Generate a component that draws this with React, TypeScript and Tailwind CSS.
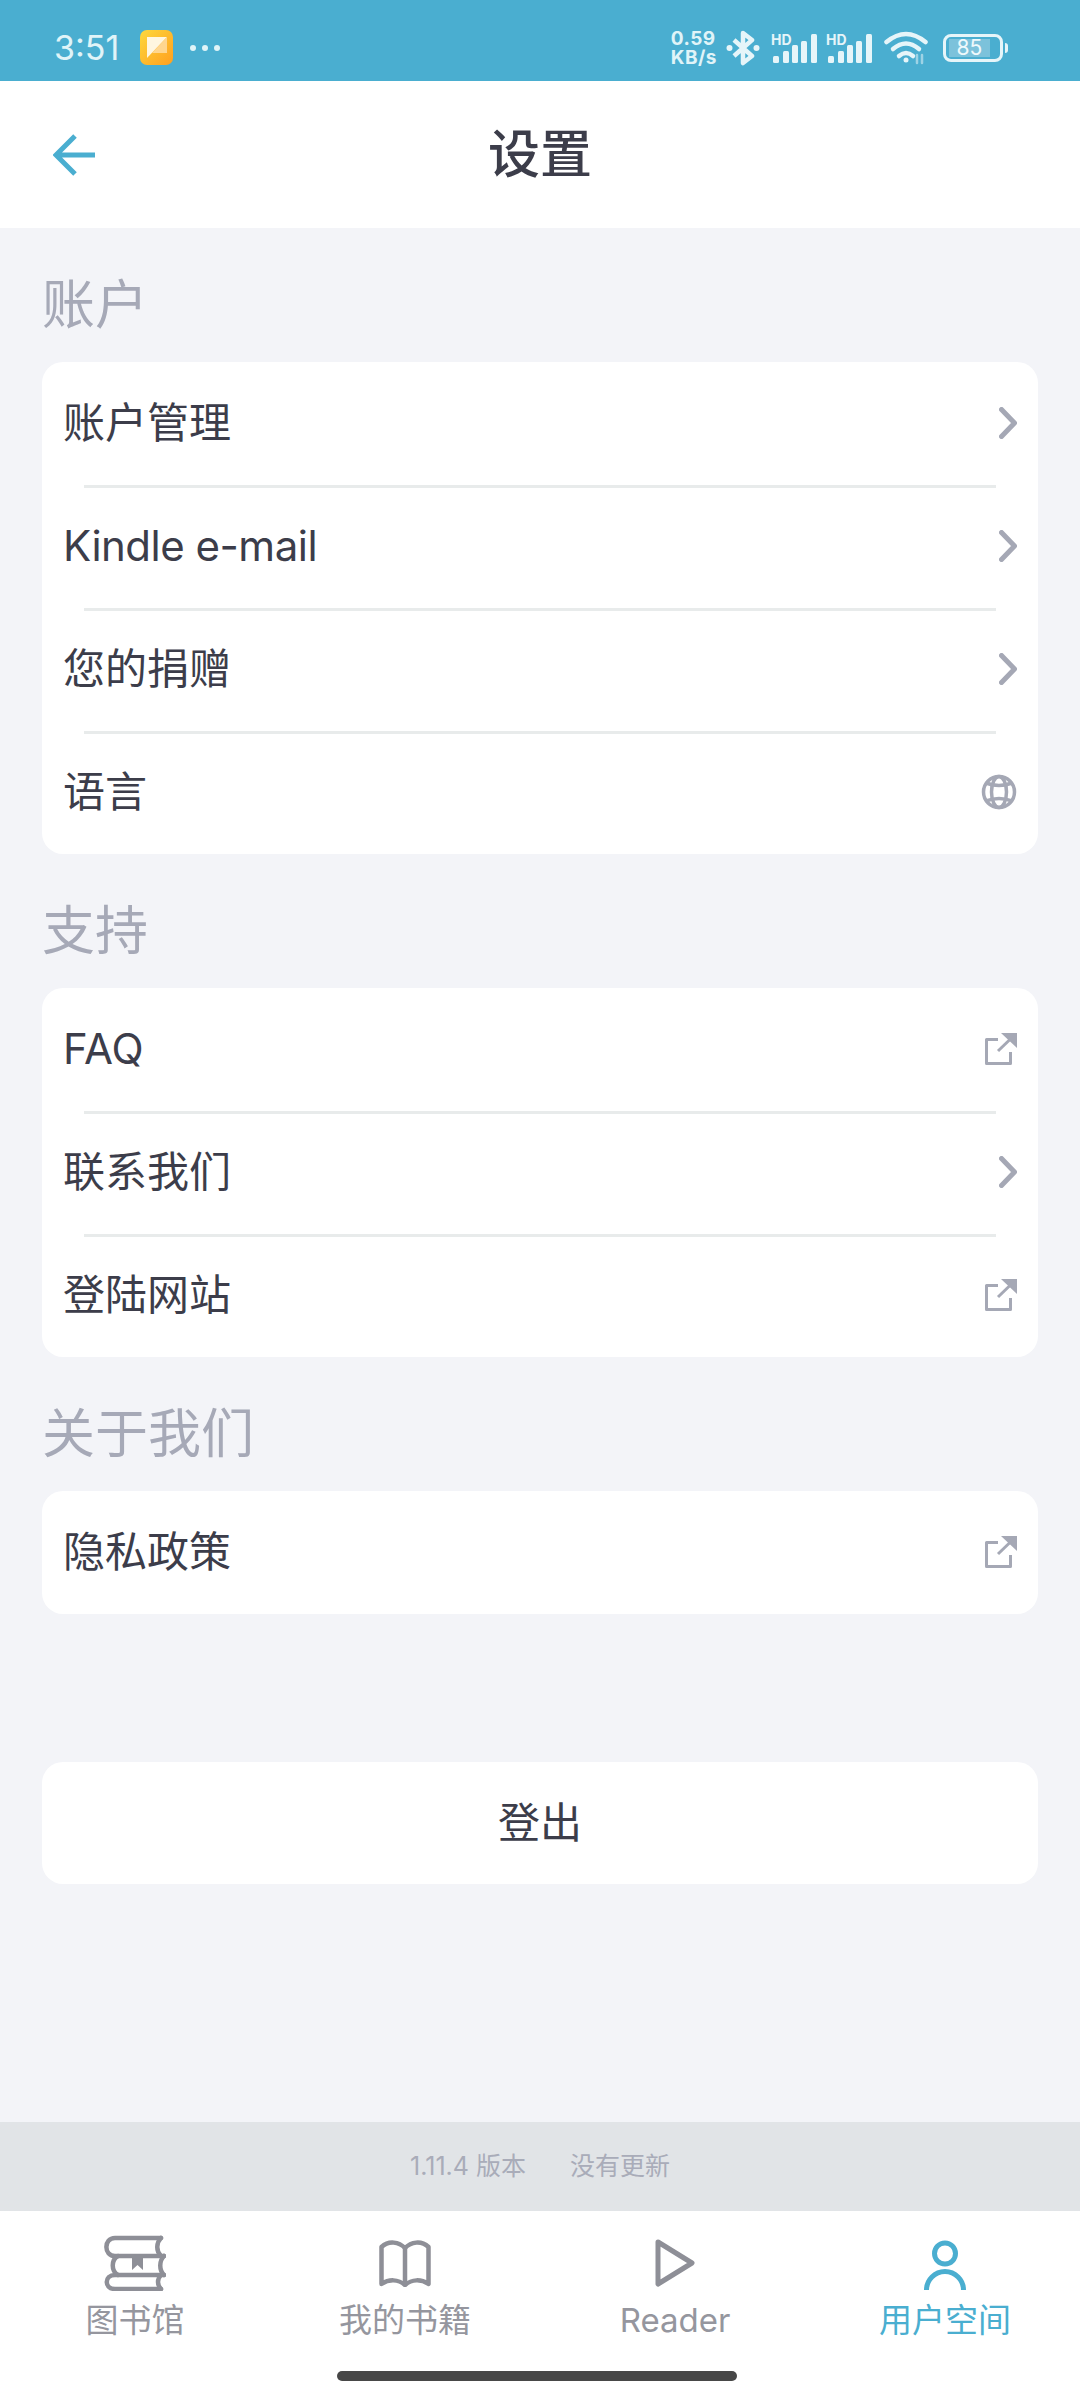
import { ReactNode } from "react";

const accountRows = [
  { label: "账户管理", icon: "chevron" },
  { label: "Kindle e-mail", icon: "chevron", tight: true },
  { label: "您的捐赠", icon: "chevron" },
  { label: "语言", icon: "globe" },
];

const supportRows = [
  { label: "FAQ", icon: "external" },
  { label: "联系我们", icon: "chevron" },
  { label: "登陆网站", icon: "external" },
];

const aboutRows = [{ label: "隐私政策", icon: "external" }];

type Row = { label: string; icon: string; tight?: boolean };

function Chevron() {
  return (
    <svg width="18" height="32" viewBox="0 0 18 32" fill="none" stroke="#a5a8b5" strokeWidth="5" strokeLinecap="round" strokeLinejoin="round">
      <path d="M2.5 2.5 L15.5 16 L2.5 29.5" />
    </svg>
  );
}

function Globe() {
  return (
    <svg width="36" height="36" viewBox="0 0 36 36" fill="none" stroke="#a5a8b5" strokeWidth="3.5">
      <circle cx="18" cy="18" r="15.5" />
      <ellipse cx="18" cy="18" rx="7.5" ry="15.5" />
      <path d="M5 9 Q18 14 31 9 M5 27 Q18 22 31 27" />
    </svg>
  );
}

function External() {
  return (
    <svg width="32" height="32" viewBox="0 0 32 32" fill="none" stroke="#a5a8b5" strokeWidth="3">
      <path d="M13 6.5 H1.5 V30.5 H25.5 V19" strokeLinejoin="round" />
      <path d="M13 18 L26 5.5" />
      <polygon points="16,0 32,0 32,15" fill="#a5a8b5" stroke="none" />
    </svg>
  );
}

function RowIcon({ name }: { name: string }) {
  if (name === "globe") return <Globe />;
  if (name === "external") return <External />;
  return <Chevron />;
}

function Section({ title, rows }: { title: string; rows: Row[] }) {
  return (
    <section>
      <h2 className="flex h-[134px] items-center pt-[21px] text-[53px] leading-none text-[#a6a9b7]">{title}</h2>
      <div className="overflow-hidden rounded-[21px] bg-white">
        {rows.map((row, i) => (
          <div key={row.label} className="flex h-[123px] flex-col">
            <div className={i === 0 ? "h-[3px]" : "mx-[42px] h-[3px] bg-[#e8ebeb]"} />
            <div className="flex flex-1 items-center justify-between pb-[4px] pl-[21px] pr-[21px]">
              <span className={row.tight ? "text-[42px] leading-none tracking-[-0.5px] text-[#3c3d4a]" : "text-[42px] leading-none text-[#3c3d4a]"}>{row.label}</span>
              <RowIcon name={row.icon} />
            </div>
          </div>
        ))}
      </div>
    </section>
  );
}

function SignalIcon() {
  return (
    <div className="relative h-[30px] w-[46px]">
      <span className="absolute left-0 top-0 text-[14px] font-bold leading-none text-[#e6f5f9]">HD</span>
      <svg width="46" height="30" viewBox="0 0 46 30" fill="#e6f5f9">
        <rect x="2" y="23" width="6" height="7" rx="1.5" />
        <rect x="12" y="18" width="6" height="12" rx="1.5" />
        <rect x="21" y="12" width="6" height="18" rx="1.5" />
        <rect x="30" y="8" width="6" height="22" rx="1.5" />
        <rect x="40" y="1" width="6" height="29" rx="1.5" />
      </svg>
    </div>
  );
}

function StatusBar() {
  return (
    <div className="flex h-[81px] shrink-0 items-center justify-between bg-[#4aaed0] pl-[54px] pr-[72px] pt-[14px] text-[#e0f4f8]">
      <div className="flex items-center">
        <span className="text-[34px] leading-none">3:51</span>
        <svg width="33" height="35" viewBox="0 0 33 35" className="ml-[21px]">
          <defs>
            <linearGradient id="app-grad" x1="0" y1="0" x2="1" y2="1">
              <stop offset="0" stopColor="#fdd83c" />
              <stop offset="1" stopColor="#ff9f1f" />
            </linearGradient>
          </defs>
          <rect width="33" height="35" rx="7" fill="url(#app-grad)" />
          <polygon points="7,7 27,7 7,28" fill="#fff6e0" />
          <polygon points="27,7 27,23 12,23" fill="#ffd68f" />
        </svg>
        <div className="ml-[17px] flex gap-[6px]">
          <span className="h-[6px] w-[6px] rounded-full bg-[#e0f4f8]" />
          <span className="h-[6px] w-[6px] rounded-full bg-[#e0f4f8]" />
          <span className="h-[6px] w-[6px] rounded-full bg-[#e0f4f8]" />
        </div>
      </div>
      <div className="flex items-center">
        <div className="flex flex-col text-[19px] font-bold leading-[19px] tracking-[0.5px]">
          <span>0.59</span>
          <span>KB/s</span>
        </div>
        <svg width="34" height="36" viewBox="0 0 34 36" fill="none" stroke="#e6f5f9" strokeWidth="4.5" className="ml-[9px]" strokeLinejoin="round">
          <path d="M8 10 L26 26 L17 33 V3 L26 10 L8 26" />
          <circle cx="3.5" cy="18" r="3" fill="#e6f5f9" stroke="none" />
          <circle cx="30.5" cy="18" r="3" fill="#e6f5f9" stroke="none" />
        </svg>
        <div className="ml-[11px]"><SignalIcon /></div>
        <div className="ml-[9px]"><SignalIcon /></div>
        <svg width="44" height="34" viewBox="0 0 44 34" fill="none" stroke="#e6f5f9" strokeWidth="4.5" strokeLinecap="round" className="ml-[12px]">
          <path d="M2.5 11 Q22 -5 41.5 11" />
          <path d="M9 18 Q22 7 35 18" />
          <path d="M15 25 Q22 19 29 25" />
          <circle cx="22" cy="29" r="2.5" fill="#e6f5f9" stroke="none" />
          <path d="M33 24 V32 M38 24 V32" stroke="#9ed3e5" strokeWidth="2.5" />
        </svg>
        <div className="ml-[15px] flex items-center">
          <div className="flex h-[28px] w-[60px] items-center rounded-[8px] border-[3px] border-[#e6f5f9] px-[3px]">
            <div className="flex h-[18px] w-[41px] items-center justify-center bg-[#7cc2db] text-[21px] leading-none text-[#eef9fc]">85</div>
          </div>
          <span className="ml-[2px] h-[10px] w-[3px] rounded-r-sm bg-[#e6f5f9]" />
        </div>
      </div>
    </div>
  );
}

function LibraryIcon() {
  return (
    <svg width="62" height="56" viewBox="0 0 62 56" fill="none" stroke="#8e8f97" strokeWidth="4.5" strokeLinecap="round" strokeLinejoin="round">
      <path d="M57 3 H11 C-0.5 3 -0.5 21 11 21 H60" />
      <path d="M14 21 C7 25 7 36 14 40" />
      <path d="M60 40 H11 C0 40 0 54 11 54 H57" />
      <path d="M57 3 C52 8 52 16 57 21 M60 21 C55 26 55 35 60 40 M57 40 C53 44 53 50 57 54" />
      <polygon points="28,21 39,21 39,35 33.5,30 28,35" fill="#8e8f97" stroke="none" />
    </svg>
  );
}

function BookIcon() {
  return (
    <svg width="54" height="48" viewBox="0 0 52 48" fill="none" stroke="#8e8f97" strokeWidth="4.5" strokeLinejoin="round">
      <path d="M26 9 C20 3 10 1 2.5 8 V45 C10 40 19 40 26 46 C33 40 42 40 49.5 45 V8 C42 1 32 3 26 9 Z" />
      <path d="M26 9 V44" />
    </svg>
  );
}

function PlayIcon() {
  return (
    <svg width="40" height="48" viewBox="0 0 40 48" fill="none" stroke="#8e8f97" strokeWidth="5" strokeLinejoin="round">
      <path d="M3 3 L37 24 L3 45 Z" />
    </svg>
  );
}

function PersonIcon() {
  return (
    <svg width="42" height="50" viewBox="0 0 42 50" fill="none" stroke="#4aaed0" strokeWidth="5" className="mt-[3px]">
      <circle cx="21" cy="13.5" r="10.5" />
      <path d="M2.5 50 A18.5 18.5 0 0 1 39.5 50" />
    </svg>
  );
}

function Tab({ icon, label, active }: { icon: ReactNode; label: string; active?: boolean }) {
  return (
    <div className="flex flex-col items-center">
      <div className="flex h-[56px] items-center">{icon}</div>
      <span className={active ? "mt-[8px] text-[33px] leading-[42px] text-[#4aaed0]" : "mt-[8px] text-[33px] leading-[42px] text-[#95969e]"}>{label}</span>
    </div>
  );
}

export default function App() {
  return (
    <div className="flex h-[2400px] w-[1080px] flex-col bg-[#f3f4f8] font-[Inter,'Noto_Sans_CJK_SC',sans-serif]">
      <StatusBar />
      <header className="relative flex h-[147px] shrink-0 items-center justify-center bg-white">
        <svg width="42" height="44" viewBox="0 0 42 44" fill="none" stroke="#4aaed0" strokeWidth="5" className="absolute left-[53px] top-[52px]">
          <path d="M22 3 L3 22 L22 41 M3 22 H42" />
        </svg>
        <h1 className="text-[52px] font-medium leading-none text-[#3c3d4a]">设置</h1>
      </header>

      <main className="flex-1 px-[42px]">
        <Section title="账户" rows={accountRows} />
        <Section title="支持" rows={supportRows} />
        <Section title="关于我们" rows={aboutRows} />
        <button className="mt-[148px] flex h-[122px] w-full items-center justify-center rounded-[21px] bg-white pb-[2px] text-[42px] text-[#3c3d4a]">登出</button>
      </main>

      <div className="flex h-[89px] shrink-0 items-center justify-center gap-[44px] bg-[#e1e4e7] text-[25px] text-[#a9acb9]">
        <span>1.11.4 版本</span>
        <span>没有更新</span>
      </div>

      <nav className="flex h-[189px] shrink-0 flex-col bg-white">
        <div className="grid grid-cols-4 pt-[24px]">
          <Tab icon={<LibraryIcon />} label="图书馆" />
          <Tab icon={<BookIcon />} label="我的书籍" />
          <Tab icon={<PlayIcon />} label="Reader" />
          <Tab icon={<PersonIcon />} label="用户空间" active />
        </div>
        <div className="mb-[19px] ml-[337px] mt-auto h-[10px] w-[400px] rounded-full bg-[#474747]" />
      </nav>
    </div>
  );
}
